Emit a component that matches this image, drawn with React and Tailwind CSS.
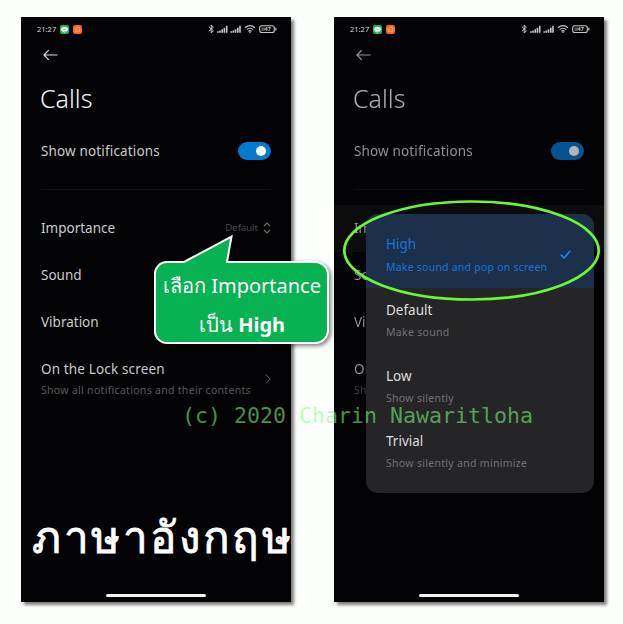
function StatusBar() {
  return (
    <div className="flex h-6 items-center justify-between pl-4 pr-3.5">
      <div className="flex items-center">
        <span className="w-[19px] font-['Noto_Sans'] text-[7.5px] font-normal leading-3 text-[#dcdcdc]">21:27</span>
        <svg className="ml-1" width="9" height="9" viewBox="0 0 9 9">
          <rect width="9" height="9" rx="2" fill="#1cb454" />
          <ellipse cx="4.5" cy="4.3" rx="3.3" ry="2.6" fill="#fff" />
          <path d="M4 6.5v1.5l2-1.5zM2.7 4.3h3.6" fill="#fff" stroke="#7fd69c" strokeWidth=".8" />
        </svg>
        <svg className="ml-[3.5px]" width="9" height="9" viewBox="0 0 9 9">
          <rect width="9" height="9" rx="2" fill="#fb6411" />
          <path d="M2.2 3.2v3.5h4.6V2.9L5.6 2.2H3.2M3.2 4.2l2 1" fill="none" stroke="#ffc49d" strokeWidth=".8" />
        </svg>
      </div>
      <svg width="69" height="10" viewBox="0 0 69 10" fill="none" stroke="#c8c8c8">
        <path d="M.8 2.7 5.4 6.8 3.2 9V1L5.4 3.2.8 7.3" strokeWidth="1" />
        <path d="M10 7.3v1.5M12 6.5v2.3M14.2 5.3v3.5M16.4 3.8v5M18.7 1.7v7.1M23.2 7.3v1.5M25.3 6.5v2.3M27.5 5.3v3.5M29.8 3.8v5M32 1.7v7.1" strokeWidth="1.6" />
        <path d="M37 3.7q5-4.2 10 0M38.7 5.6q3.3-2.7 6.6 0M40.4 7.3q1.6-1.3 3.2 0" strokeWidth="1.2" />
        <circle cx="42" cy="8.3" r=".8" fill="#c8c8c8" stroke="none" />
        <rect x="51.7" y="1.7" width="14.6" height="6.8" rx="2" strokeWidth="1.1" />
        <path d="M67.8 3.8v2.6" strokeWidth="1.2" />
        <rect x="53.4" y="3.4" width="3.6" height="3.4" fill="#555" stroke="none" />
        <text x="56.6" y="7.1" fill="#c8c8c8" stroke="none" fontSize="5.5" fontFamily="Noto Sans" fontWeight="bold">47</text>
      </svg>
    </div>
  );
}

function Row({ label, className = "", children }) {
  return (
    <div className={`flex h-[46.8px] items-center justify-between px-5 ${className}`}>
      <span className="text-[13.5px]">{label}</span>
      {children}
    </div>
  );
}

function Phone({ dim = false, children }) {
  return (
    <section className="relative flex h-[585px] w-[270px] shrink-0 flex-col overflow-hidden bg-[#030205] font-['Noto_Sans'] font-normal text-[#cbcbcb]">
      <StatusBar />
      <div className={dim ? "opacity-70" : ""}>
        <div className="flex h-7 items-center pl-[22px]">
          <svg width="15" height="12" viewBox="0 0 15 12" fill="none" stroke="#dedede" strokeWidth="1.2">
            <path d="M14.5 6H1M5.7 1.2 1 6l4.7 4.8" />
          </svg>
        </div>
        <h1 className="mt-[11px] h-9 pl-[19px] text-[25px] font-light leading-9 text-[#f4f4f4]">Calls</h1>
        <div className="mt-[17px] flex h-9 items-center justify-between pl-5 pr-5">
          <span className="pt-px text-[13.5px] tracking-[0.15px]">Show notifications</span>
          <span className="-mt-px flex h-[18px] w-[33px] items-center justify-end rounded-full bg-[#0578d0] pr-[5px]">
            <span className="h-2.5 w-2.5 rounded-full bg-white" />
          </span>
        </div>
        <div className="mx-5 mt-5 h-px bg-[#151417]" />
        <Row label="Importance" className={dim ? "mt-[15px] bg-[#111111]" : "mt-[15px]"}>
          {!dim && (
            <span className="flex items-center gap-[5px] text-[9.5px] text-[#4c4c4c]">
              Default
              <svg width="8" height="12" viewBox="0 0 8 12" fill="none" stroke="#707070" strokeWidth="1.1">
                <path d="M1 4l3-3 3 3M1 8l3 3 3-3" />
              </svg>
            </span>
          )}
        </Row>
        <Row label="Sound" />
        <Row label="Vibration" />
        <div className="flex items-center justify-between pl-5 pr-5 pt-[13px]">
          <div className="flex flex-col whitespace-nowrap">
            <span className="text-[13.5px] leading-[22px] tracking-[0.15px]">{dim ? "On" : "On the Lock screen"}</span>
            <span className="text-[10.5px] leading-5 tracking-[0.3px] text-[#5a5a5a]">{dim ? "Sho" : "Show all notifications and their contents"}</span>
          </div>
          {!dim && (
            <svg width="6" height="10" viewBox="0 0 6 10" fill="none" stroke="#606060">
              <path d="m.7.5 4.5 4.5L.7 9.5" />
            </svg>
          )}
        </div>
      </div>
      <div className="mx-auto mb-[5px] mt-auto h-[3px] w-[100px] rounded-full bg-[#f2f2f2]" />
      {children}
    </section>
  );
}

const options = [
  ["Default", "Make sound"],
  ["Low", "Show silently"],
  ["Trivial", "Show silently and minimize"],
];

function ImportanceMenu() {
  return (
    <div className="absolute left-8 top-[196.5px] flex h-[279px] w-[228px] flex-col overflow-hidden rounded-xl bg-[#252427]">
      <div className="flex h-[74px] shrink-0 items-center justify-between bg-[#1d304b] pl-5 pr-[23px] pt-[11px] text-[#1675dd]">
        <div className="flex flex-col whitespace-nowrap">
          <span className="text-[13.5px] leading-[22px]">High</span>
          <span className="text-[10.5px] leading-6 tracking-[0.23px]">Make sound and pop on screen</span>
        </div>
        <svg className="-mt-1" width="11" height="9" viewBox="0 0 11 9" fill="none" stroke="#1687ff" strokeWidth="1.6">
          <path d="m.7 4.6 3.5 3.3L10.3.8" />
        </svg>
      </div>
      <div className="flex flex-col pl-5 pt-[11.5px]">
        {options.map(([name, note]) => (
          <div key={name} className="flex h-[65.5px] shrink-0 flex-col whitespace-nowrap">
            <span className="text-[13.5px] leading-[22px] text-[#dedede]">{name}</span>
            <span className="text-[10.5px] leading-[23px] tracking-[0.3px] text-[#737276]">{note}</span>
          </div>
        ))}
      </div>
    </div>
  );
}

function Callout() {
  return (
    <div className="absolute left-[150px] top-[230px] h-[120px] w-[184px]">
      <svg className="absolute inset-0 drop-shadow-[2px_2px_2px_rgba(0,0,0,0.5)]" width="184" height="120" viewBox="0 0 184 120">
        <path d="M17 32H34L81.5 6.5 77 32H165a13 13 0 0 1 13 13v55a13 13 0 0 1-13 13H17a12 12 0 0 1-12-13V45a12 12 0 0 1 12-13z" fill="#07b253" stroke="#fff" strokeWidth="2" />
      </svg>
      <div className="relative flex flex-col items-center pt-[36px] font-['Noto_Sans'] text-[20px] leading-[39px] text-white">
        <p className="whitespace-nowrap">เลือก Importance</p>
        <p className="whitespace-nowrap">เป็น <b>High</b></p>
      </div>
    </div>
  );
}

export default function App() {
  return (
    <main className="relative flex h-[624px] w-[623px] gap-[43px] overflow-hidden bg-[#fdfffc] pl-[21px] pt-[17px]">
      <div className="h-[585px] shadow-[3px_3px_3px_rgba(0,0,0,0.5)]">
        <Phone />
      </div>
      <div className="h-[585px] shadow-[3px_3px_3px_rgba(0,0,0,0.5)]">
        <Phone dim>
          <ImportanceMenu />
        </Phone>
      </div>
      <Callout />
      <p className="absolute left-[32px] top-[501px] whitespace-nowrap font-['Noto_Sans'] text-[44px] font-normal leading-[70px] tracking-[2.6px] text-white [-webkit-text-stroke:0.8px_white]">ภาษาอังกฤษ</p>
      <svg className="absolute left-[340px] top-[196px]" width="264" height="108" viewBox="0 0 264 108">
        <ellipse cx="131.5" cy="54.5" rx="127.2" ry="49" fill="none" stroke="#69f835" strokeWidth="2.7" />
      </svg>
      <p className="absolute left-[182px] top-[401px] whitespace-nowrap font-['DejaVu_Sans_Mono'] text-[21.6px] leading-[30px] text-[rgba(128,255,128,0.57)]">(c) 2020 Charin Nawaritloha</p>
    </main>
  );
}
